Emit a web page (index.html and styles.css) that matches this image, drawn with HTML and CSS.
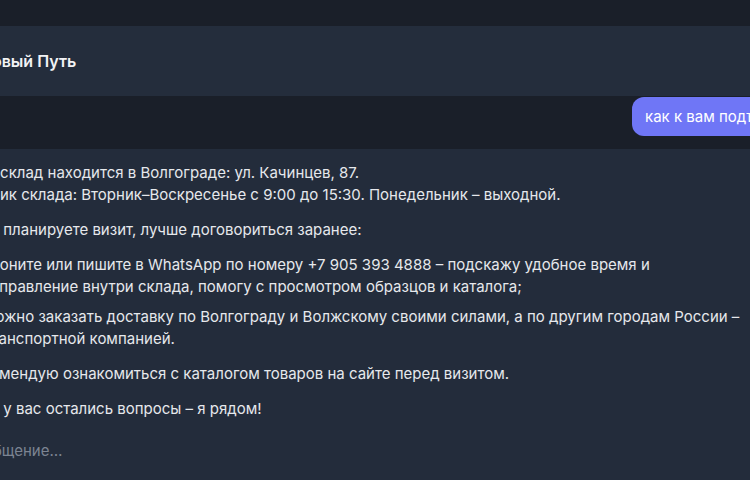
FILE: index.html
```html
<!DOCTYPE html>
<html lang="ru">
<head>
<meta charset="utf-8">
<link rel="stylesheet" href="styles.css">
</head>
<body>
<div class="app">
  <div class="topbar"></div>
  <header class="header"><span class="title">Новый Путь</span></header>
  <div class="user-row"><div class="bubble">как к вам подъехать?</div></div>
  <section class="answer">
    <p>Наш склад находится в Волгограде: ул. Качинцев, 87.<br>График склада: Вторник–Воскресенье с 9:00 до 15:30. Понедельник – выходной.</p>
    <p>Если планируете визит, лучше договориться заранее:</p>
    <ul>
      <li>Звоните или пишите в WhatsApp по номеру +7 905 393 4888 – подскажу удобное время и<br>направление внутри склада, помогу с просмотром образцов и каталога;</li>
      <li>Можно заказать доставку по Волгограду и Волжскому своими силами, а по другим городам России –<br>транспортной компанией.</li>
    </ul>
    <p>Рекомендую ознакомиться с каталогом товаров на сайте перед визитом.</p>
    <p>Если у вас остались вопросы – я рядом!</p>
    <div class="input">Сообщение…</div>
  </section>
</div>
</body>
</html>
```
FILE: styles.css
```css
html, body { margin: 0; padding: 0; }
body {
  background: #1a1f29;
  overflow: hidden;
  width: 750px;
  height: 480px;
  font-family: Inter, "Noto Sans", sans-serif;
  color: #e6e8ec;
}
.app { margin-left: -36px; width: 1000px; }
.topbar { height: 26px; background: #1a1f29; }
.header {
  height: 70px;
  background: #242d3c;
  display: flex;
  align-items: center;
}
.title { font-weight: 600; font-size: 16px; color: #f2f3f5; margin-left: 16px; }
.user-row {
  height: 53px;
  background: #1a1f29;
  display: flex;
  align-items: flex-start;
  padding-left: 668px;
}
.bubble {
  margin-top: 1px;
  height: 39px;
  display: flex;
  align-items: center;
  padding: 0 13px;
  background: #6f76f6;
  color: #ffffff;
  border-radius: 12px;
  font-size: 15px;
  white-space: nowrap;
}
.answer {
  background: #232c3b;
  padding: 13px 0 40px 0;
  font-size: 15px;
  line-height: 22px;
  height: 400px;
}
.answer p { margin: 0 0 13px 0; white-space: nowrap; }
.answer ul { margin: 0 0 13px 0; padding-left: 18px; list-style: none; }
.answer li { margin: 0 0 8px 0; white-space: nowrap; }
.answer li:last-child { margin-bottom: 0; }
.input { margin-top: 20px; color: #7c8492; }
```
